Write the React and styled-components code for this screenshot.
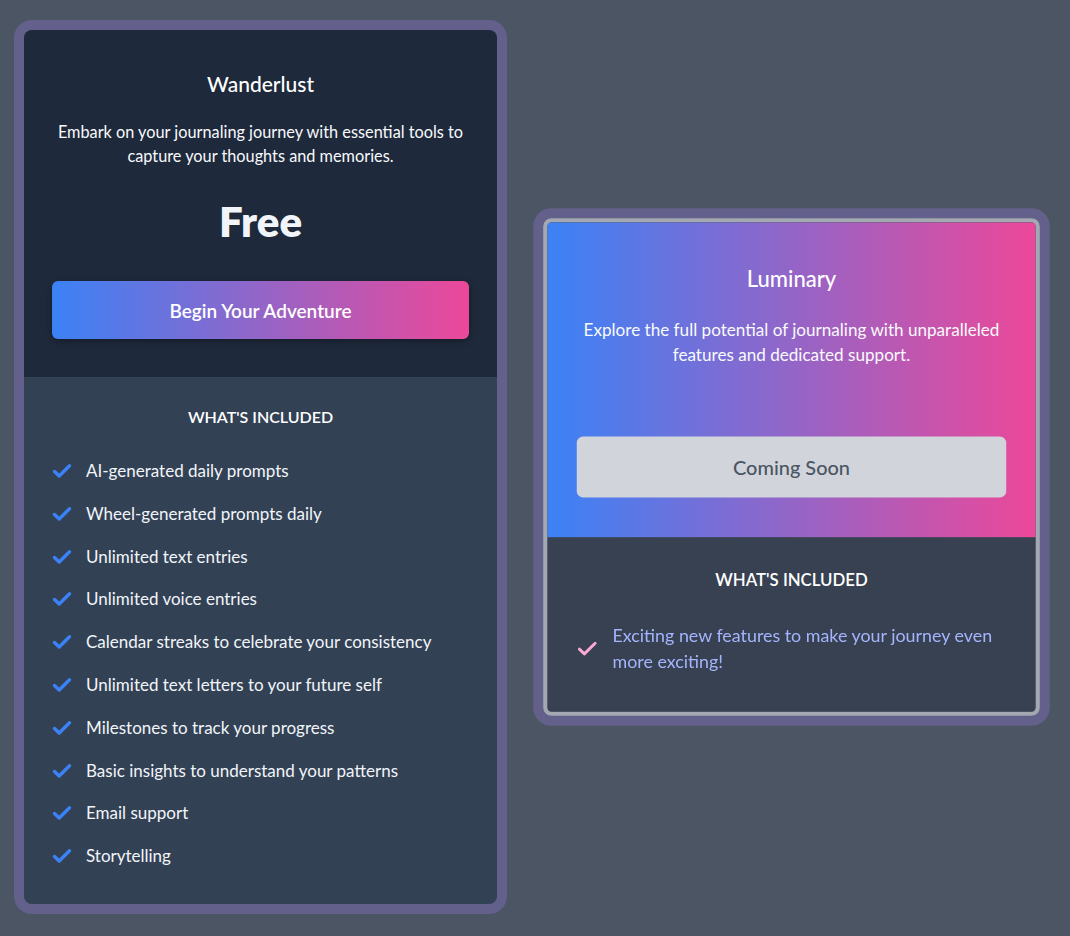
import React from 'react'
import styled, { createGlobalStyle } from 'styled-components'

const GlobalStyle = createGlobalStyle`
  body {
    margin: 0;
    background: #4b5563;
    font-family: "Lato", "Noto Sans", sans-serif;
  }
`

const freeFeatures = [
  'AI-generated daily prompts',
  'Wheel-generated prompts daily',
  'Unlimited text entries',
  'Unlimited voice entries',
  'Calendar streaks to celebrate your consistency',
  'Unlimited text letters to your future self',
  'Milestones to track your progress',
  'Basic insights to understand your patterns',
  'Email support',
  'Storytelling',
]

const CheckIcon = ({ color, weight }) => (
  <Icon viewBox="0 0 20 16" fill="none">
    <path
      d="M2.5 8.5 L7.2 13 L17.5 2.8"
      stroke={color}
      strokeWidth={weight}
      strokeLinecap="round"
      strokeLinejoin="round"
    />
  </Icon>
)

export default function App() {
  return (
    <Page>
      <GlobalStyle />
      <Grid>
        <Card>
          <Top>
            <Title>Wanderlust</Title>
            <Desc>
              Embark on your journaling journey with essential tools to capture your thoughts and memories.
            </Desc>
            <Price>Free</Price>
            <Button>Begin Your Adventure</Button>
          </Top>
          <Bottom>
            <Heading>What's Included</Heading>
            <List>
              {freeFeatures.map((f) => (
                <Item key={f}>
                  <CheckIcon color="#3b82f6" weight={3.4} />
                  <span>{f}</span>
                </Item>
              ))}
            </List>
          </Bottom>
        </Card>

        <Card $featured>
          <Top $featured>
            <Title>Luminary</Title>
            <Desc>
              Explore the full potential of journaling with unparalleled features and dedicated support.
            </Desc>
            <Price $empty />
            <Button $soon>Coming Soon</Button>
          </Top>
          <Bottom $featured>
            <Heading>What's Included</Heading>
            <List>
              <Item $accent>
                <CheckIcon color="#f9a8d4" weight={2.8} />
                <span>Exciting new features to make your journey even more exciting!</span>
              </Item>
            </List>
          </Bottom>
        </Card>
      </Grid>
    </Page>
  )
}

//styling

const Page = styled.div`
  min-height: 936px;
  box-sizing: border-box;
  padding: 30px 24px;
`

const Grid = styled.div`
  display: grid;
  grid-template-columns: 473px 473px;
  column-gap: 58px;
  align-items: center;
`

const Card = styled.div`
  box-sizing: border-box;
  width: 473px;
  border-radius: 8px;
  overflow: hidden;
  box-shadow: 0 0 0 ${(p) => (p.$featured ? '9.5px' : '10px')} #63618b;
  border: ${(p) => (p.$featured ? '4px solid #a3a8b3' : 'none')};
  transform: ${(p) => (p.$featured ? 'scale(1.05)' : 'none')};
`

const Top = styled.div`
  padding: 40px 28px 38px;
  text-align: center;
  color: #ffffff;
  background: ${(p) =>
    p.$featured ? 'linear-gradient(90deg, #3b82f6 0%, #ec4899 100%)' : '#1e293b'};
`

const Title = styled.h2`
  margin: 0 0 22px;
  font-size: 21px;
  line-height: 28px;
  font-weight: 500;
`

const Desc = styled.p`
  margin: 0;
  font-size: 16.3px;
  line-height: 24px;
  color: #f8fafc;
`

const Price = styled.div`
  margin: ${(p) => (p.$empty ? '0' : '32px 0 39px')};
  height: ${(p) => (p.$empty ? '66px' : '42px')};
  font-size: 42px;
  line-height: 42px;
  font-weight: 800;
  color: #f1f5f9;
`

const Button = styled.button`
  display: block;
  width: 100%;
  height: 58px;
  border: none;
  border-radius: 6px;
  font-family: inherit;
  font-size: 19px;
  font-weight: ${(p) => (p.$soon ? 500 : 600)};
  color: ${(p) => (p.$soon ? '#4b5563' : '#ffffff')};
  background: ${(p) =>
    p.$soon ? '#d1d5db' : 'linear-gradient(90deg, #3b82f6 0%, #ec4899 100%)'};
  box-shadow: ${(p) => (p.$soon ? 'none' : '0 2px 6px rgba(0, 0, 0, 0.35)')};
  cursor: pointer;
`

const Bottom = styled.div`
  padding: 28px 28px 36px;
  background: ${(p) => (p.$featured ? '#374151' : '#334155')};
`

const Heading = styled.h3`
  margin: 0 0 30px;
  text-align: center;
  text-transform: uppercase;
  font-size: 16px;
  line-height: 24px;
  font-weight: 600;
  color: #ffffff;
`

const List = styled.ul`
  list-style: none;
  margin: 0;
  padding: 0;
  display: flex;
  flex-direction: column;
  gap: 18.8px;
`

const Item = styled.li`
  display: flex;
  align-items: center;
  gap: 14px;
  font-size: 17px;
  line-height: 24px;
  color: ${(p) => (p.$accent ? '#a5b4fc' : '#f1f5f9')};
`

const Icon = styled.svg`
  flex: none;
  width: 20px;
  height: 16px;
`
